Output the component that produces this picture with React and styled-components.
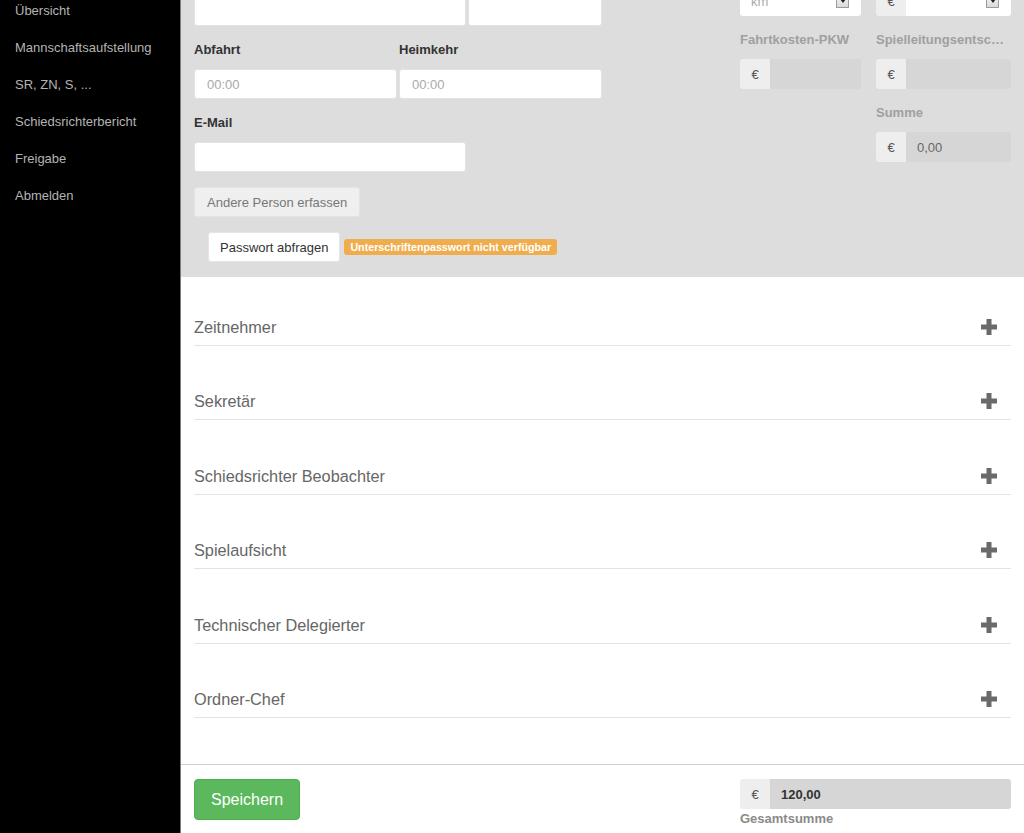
import React from "react";
import styled, { createGlobalStyle } from "styled-components";

const GlobalStyle = createGlobalStyle`
  html, body {
    margin: 0;
    padding: 0;
    font-family: "Liberation Sans", Arial, sans-serif;
    font-size: 13px;
    color: #333;
  }
  * {
    box-sizing: border-box;
  }
`;

const navItems = [
  "Übersicht",
  "Mannschaftsaufstellung",
  "SR, ZN, S, ...",
  "Schiedsrichterbericht",
  "Freigabe",
  "Abmelden"
];

const sections = [
  "Zeitnehmer",
  "Sekretär",
  "Schiedsrichter Beobachter",
  "Spielaufsicht",
  "Technischer Delegierter",
  "Ordner-Chef"
];

function PlusIcon() {
  return (
    <svg width="16" height="16" viewBox="0 0 16 16">
      <rect x="5.5" y="0" width="5" height="16" fill="#6a6a6a" />
      <rect x="0" y="5.5" width="16" height="5" fill="#6a6a6a" />
    </svg>
  );
}

function App() {
  return (
    <Root>
      <GlobalStyle />
      <Sidebar>
        <NavList>
          {navItems.map((item) => (
            <NavItem key={item}>{item}</NavItem>
          ))}
        </NavList>
      </Sidebar>
      <Main>
        <FormPanel>
          <LeftCol>
            <TopRow>
              <TextInput />
              <TextInput />
            </TopRow>
            <TimeRow>
              <div>
                <Label>Abfahrt</Label>
                <TextInput placeholder="00:00" />
              </div>
              <div>
                <Label>Heimkehr</Label>
                <TextInput placeholder="00:00" />
              </div>
            </TimeRow>
            <Field width="272px">
              <Label>E-Mail</Label>
              <TextInput />
            </Field>
            <GhostButton>Andere Person erfassen</GhostButton>
            <PasswordRow>
              <WhiteButton>Passwort abfragen</WhiteButton>
              <Badge>Unterschriftenpasswort nicht verfügbar</Badge>
            </PasswordRow>
          </LeftCol>
          <RightGrid>
            <SelectBox>
              <SelectText>km</SelectText>
              <SelectArrow />
            </SelectBox>
            <InputGroup>
              <Addon>€</Addon>
              <SelectBox flat>
                <SelectText></SelectText>
                <SelectArrow />
              </SelectBox>
            </InputGroup>
            <div>
              <Label muted>Fahrtkosten-PKW</Label>
              <InputGroup>
                <Addon>€</Addon>
                <Disabled />
              </InputGroup>
            </div>
            <div>
              <Label muted>Spielleitungsentschädigung</Label>
              <InputGroup>
                <Addon>€</Addon>
                <Disabled />
              </InputGroup>
            </div>
            <div />
            <div>
              <Label muted>Summe</Label>
              <InputGroup>
                <Addon>€</Addon>
                <Disabled>0,00</Disabled>
              </InputGroup>
            </div>
          </RightGrid>
        </FormPanel>
        <Accordion>
          {sections.map((s) => (
            <AccordionItem key={s}>
              <span>{s}</span>
              <PlusIcon />
            </AccordionItem>
          ))}
        </Accordion>
        <Footer>
          <SaveButton>Speichern</SaveButton>
          <TotalBlock>
            <InputGroup>
              <Addon>€</Addon>
              <Disabled bold>120,00</Disabled>
            </InputGroup>
            <TotalLabel>Gesamtsumme</TotalLabel>
          </TotalBlock>
        </Footer>
      </Main>
    </Root>
  );
}

const Root = styled.div`
  display: flex;
  height: 100vh;
  width: 100vw;
  overflow: hidden;
`;

const Sidebar = styled.div`
  width: 181px;
  flex: 0 0 181px;
  background-color: #000;
  border-right: 1px solid #7c7c7c;
  overflow: hidden;
`;

const NavList = styled.div`
  display: flex;
  flex-direction: column;
  margin-top: -8px;
`;

const NavItem = styled.span`
  color: #b4b4b4;
  font-size: 13px;
  line-height: 37px;
  padding-left: 15px;
  white-space: nowrap;
`;

const Main = styled.div`
  flex: 1 1 0%;
  display: flex;
  flex-direction: column;
  min-width: 0;
`;

const FormPanel = styled.div`
  background-color: #dddddd;
  display: flex;
  justify-content: space-between;
  align-items: flex-start;
  padding: 0 13px 15px;
  overflow: hidden;
`;

const LeftCol = styled.div`
  width: 408px;
  display: flex;
  flex-direction: column;
  align-items: flex-start;
`;

const TopRow = styled.div`
  display: grid;
  grid-template-columns: 272px 134px;
  column-gap: 2px;
  margin-top: -4px;
  width: 100%;
`;

const TimeRow = styled.div`
  display: grid;
  grid-template-columns: 1fr 1fr;
  column-gap: 2px;
  width: 100%;
`;

const Field = styled.div`
  width: ${(p) => p.width || "100%"};
`;

const Label = styled.div`
  font-weight: bold;
  font-size: 13px;
  line-height: 18px;
  margin-top: 15px;
  margin-bottom: 10px;
  color: ${(p) => (p.muted ? "#a0a0a0" : "#333")};
  white-space: nowrap;
  overflow: hidden;
  text-overflow: ellipsis;
`;

const TextInput = styled.input`
  display: block;
  width: 100%;
  height: 30px;
  border: 1px solid #e2e2e2;
  border-radius: 3px;
  background: #fff;
  padding: 0 12px;
  font-family: "Liberation Sans", Arial, sans-serif;
  font-size: 13px;
  color: #555;
  outline: none;
  &::placeholder {
    color: #aaa;
  }
`;

const GhostButton = styled.button`
  margin-top: 15px;
  height: 30px;
  padding: 0 12px;
  background: #efefef;
  border: 1px solid #e4e4e4;
  border-radius: 3px;
  color: #777;
  font-family: "Liberation Sans", Arial, sans-serif;
  font-size: 13px;
`;

const PasswordRow = styled.div`
  display: flex;
  align-items: center;
  gap: 4px;
  margin-top: 15px;
  margin-left: 14px;
`;

const WhiteButton = styled.button`
  height: 30px;
  padding: 0 11px;
  background: #fff;
  border: 1px solid #e6e6e6;
  border-radius: 3px;
  color: #333;
  font-family: "Liberation Sans", Arial, sans-serif;
  font-size: 13px;
`;

const Badge = styled.span`
  background: #f0ad4e;
  color: #fff;
  font-weight: bold;
  font-size: 10.7px;
  line-height: 16px;
  padding: 0 6px;
  border-radius: 3px;
  white-space: nowrap;
`;

const RightGrid = styled.div`
  display: grid;
  grid-template-columns: 121px 135px;
  column-gap: 15px;
  margin-top: -14px;
`;

const InputGroup = styled.div`
  display: flex;
  height: 30px;
  width: 100%;
`;

const Addon = styled.span`
  flex: 0 0 30px;
  display: flex;
  align-items: center;
  justify-content: center;
  background: #eeeeee;
  color: #555;
  font-size: 13px;
  border-radius: 3px 0 0 3px;
`;

const Disabled = styled.div`
  flex: 1 1 0%;
  display: flex;
  align-items: center;
  padding: 0 11px;
  background: #d6d6d6;
  border-radius: 0 3px 3px 0;
  color: ${(p) => (p.bold ? "#333" : "#666")};
  font-weight: ${(p) => (p.bold ? "bold" : "normal")};
  font-size: 13px;
`;

const SelectBox = styled.div`
  flex: 1 1 0%;
  display: flex;
  align-items: center;
  height: 30px;
  background: #fff;
  border-radius: ${(p) => (p.flat ? "0 3px 3px 0" : "3px")};
  padding: 0 12px 0 11px;
`;

const SelectText = styled.span`
  flex: 1 1 0%;
  color: #aaa;
  font-size: 13px;
`;

const SelectArrow = styled.span`
  width: 13px;
  height: 13px;
  border: 1px solid #9c9c9c;
  background: linear-gradient(#f6f6f6, #d9d9d9);
  display: flex;
  align-items: center;
  justify-content: center;
  &::after {
    content: "";
    border-top: 4px solid #222;
    border-left: 3px solid transparent;
    border-right: 3px solid transparent;
  }
`;

const Accordion = styled.div`
  flex: 1 1 0%;
  display: flex;
  flex-direction: column;
  gap: 44.4px;
  padding: 39px 13px 0;
`;

const AccordionItem = styled.div`
  display: flex;
  justify-content: space-between;
  align-items: center;
  font-size: 16.3px;
  line-height: 22px;
  color: #666;
  padding: 0 14px 7px 0;
  border-bottom: 1px solid #e3e3e3;
`;

const Footer = styled.div`
  height: 69px;
  flex: 0 0 69px;
  border-top: 1px solid #cfcfcf;
  padding: 14px 13px 0;
  display: flex;
  justify-content: space-between;
  align-items: flex-start;
`;

const SaveButton = styled.button`
  height: 41px;
  padding: 0 16px;
  background: #5cb85c;
  border: 1px solid #4cae4c;
  border-radius: 4px;
  color: #fff;
  font-family: "Liberation Sans", Arial, sans-serif;
  font-size: 16px;
`;

const TotalBlock = styled.div`
  width: 271px;
  display: flex;
  flex-direction: column;
`;

const TotalLabel = styled.span`
  margin-top: 1px;
  font-weight: bold;
  font-size: 13px;
  line-height: 18px;
  color: #8a8a8a;
`;

export default App;
